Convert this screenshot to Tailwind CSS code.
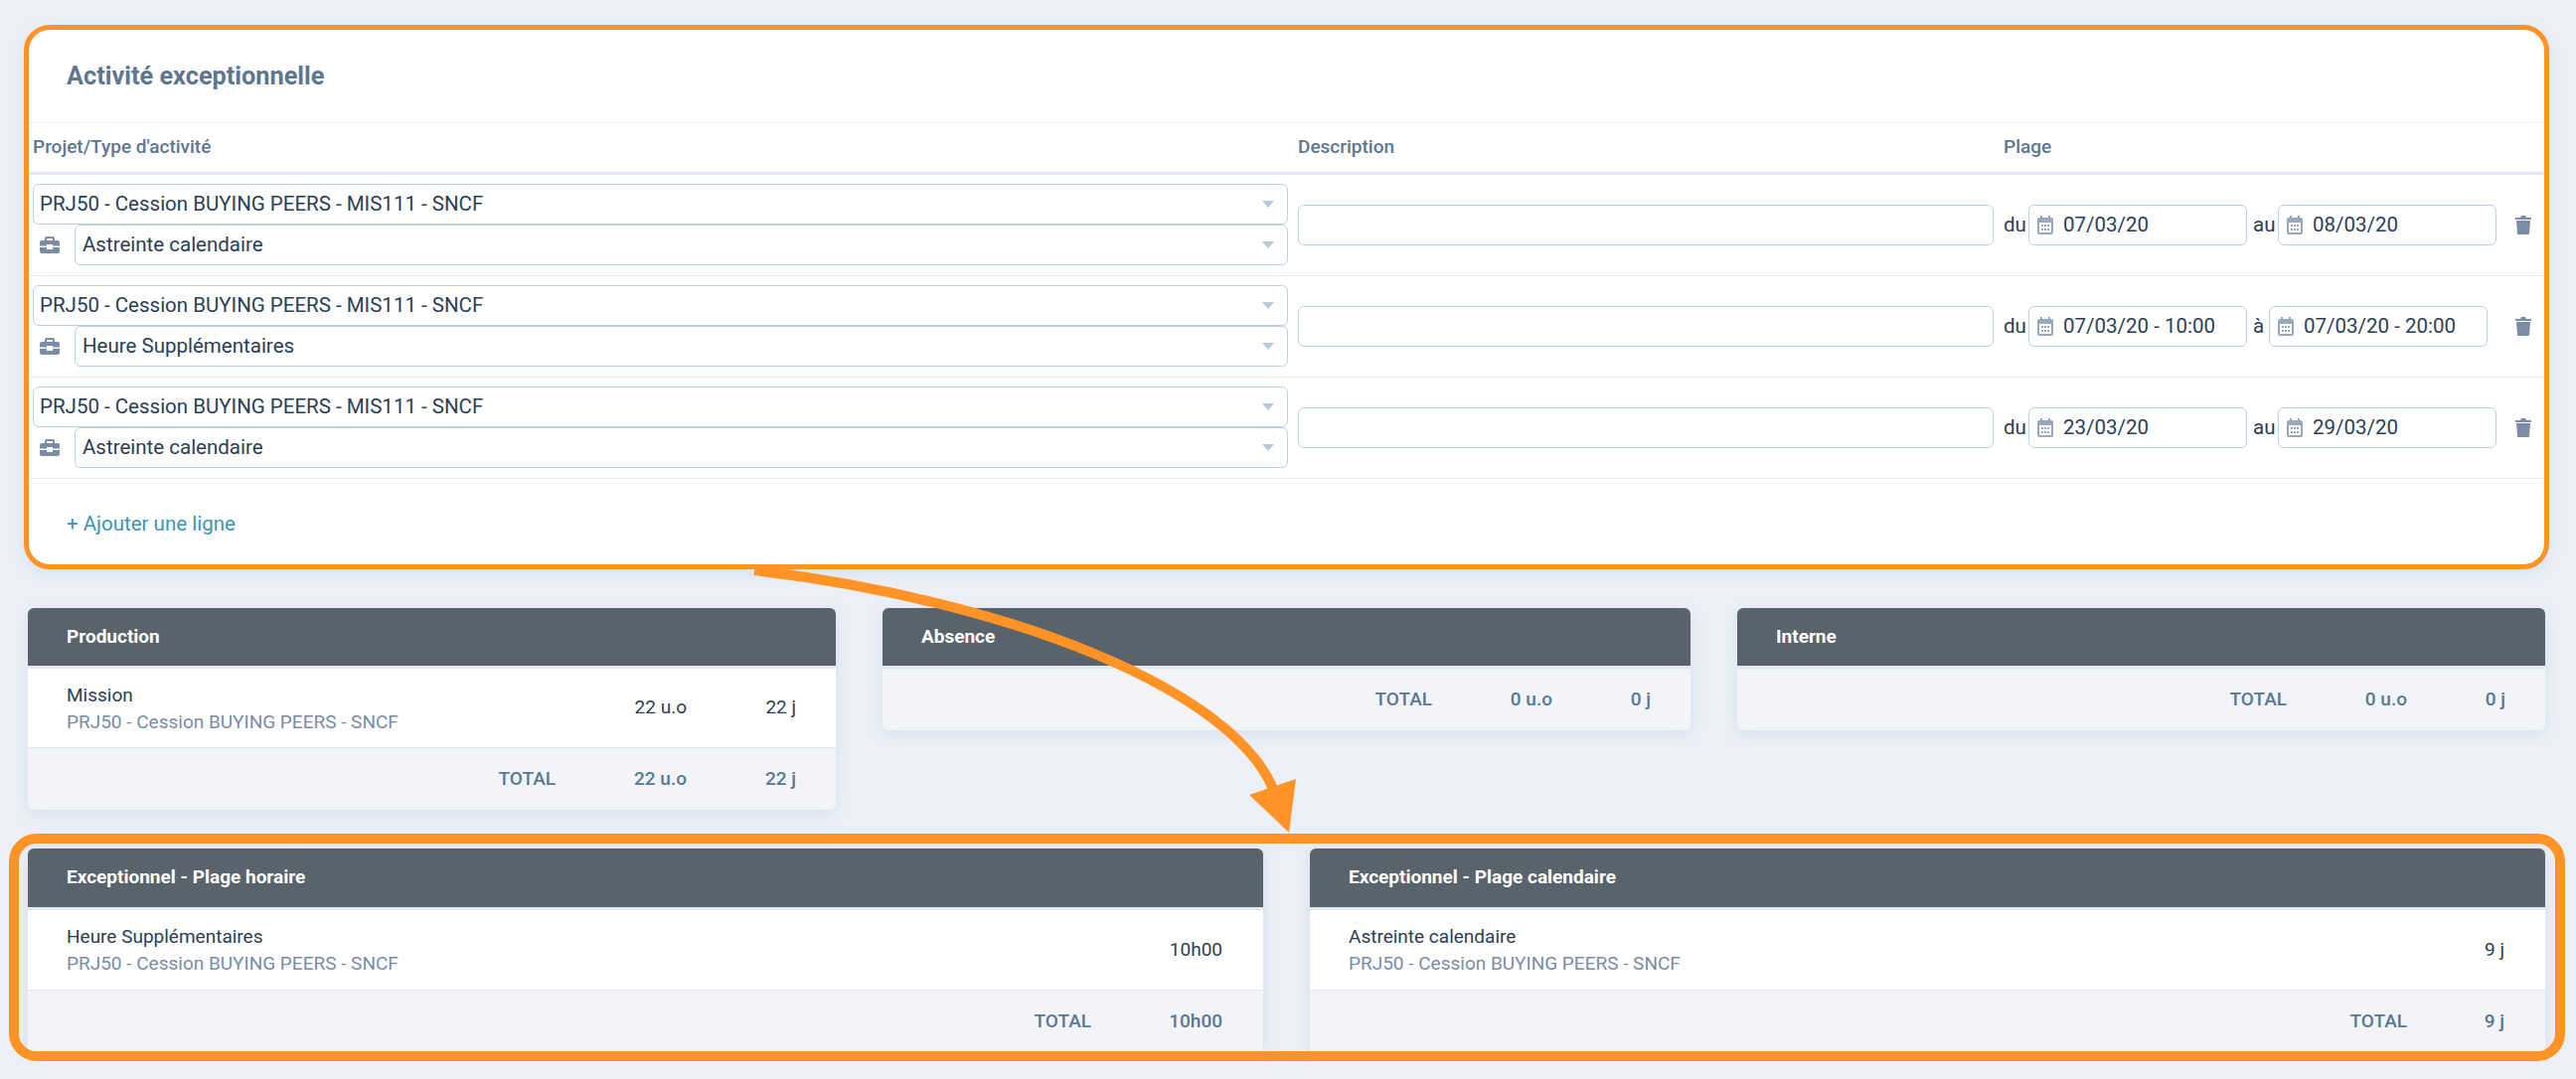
<!DOCTYPE html>
<html lang="fr">
<head>
    <meta charset="UTF-8">
    <title>Activité exceptionnelle</title>
    <script src="https://cdn.jsdelivr.net/npm/@tailwindcss/browser@4"></script>
</head>
<body class="relative w-[2592px] h-[1086px] overflow-hidden bg-[#ebf0f8] font-['Roboto',sans-serif] text-[19px] text-[#2c3e55]">

    <!-- Activité exceptionnelle -->
    <div class="pt-[25px] pl-[24px]">
        <div class="w-[2541px] h-[548px] bg-white border-[5px] border-[#ff9326] rounded-[26px] overflow-hidden shadow-[0_4px_14px_rgba(90,110,140,0.12)]">
            <h2 class="h-[93px] pl-[38px] flex items-center text-[25.300px] font-bold text-[#5f7690]">Activité exceptionnelle</h2>
            <div class="h-[53px] flex items-center border-t border-[#eef0f3] border-b-[3px] border-b-[#e5e9ee] text-[19px] font-medium text-[#5f7690]">
                <div class="w-[1277px] pl-[4px]">Projet/Type d'activité</div>
                <div class="w-[710px]">Description</div>
                <div>Plage</div>
            </div>

            <!-- ligne 1 -->
            <div class="h-[102px] flex border-b border-[#e8ebef] text-[20.500px]">
                <div class="w-[1263px] ml-[4px] mr-[10px] pt-[9px]">
                    <div class="h-[41px] flex items-center justify-between pl-[6px] pr-[13px] border border-[#c0d0e0] rounded-[6px]">
                        <span>PRJ50 - Cession BUYING PEERS - MIS111 - SNCF</span>
                        <svg width="12" height="7" viewBox="0 0 12 7"><path d="M0 0h12L6 7z" fill="#b9c9da"/></svg>
                    </div>
                    <div class="flex items-center">
                        <svg class="w-[20px] h-[17px] ml-[7px] mr-[15px]" viewBox="0 0 20 17"><path d="M7 0h6a2 2 0 0 1 2 2v2h3a2 2 0 0 1 2 2v3.500h-7V8H7v1.500H0V6a2 2 0 0 1 2-2h3V2a2 2 0 0 1 2-2zm0 2v2h6V2zM0 11h7v2h6v-2h7v4a2 2 0 0 1-2 2H2a2 2 0 0 1-2-2z" fill="#7a8ca6" fill-rule="evenodd"/></svg>
                        <div class="flex-1 h-[41px] flex items-center justify-between pl-[7px] pr-[13px] border border-[#c0d0e0] rounded-[6px]">
                            <span>Astreinte calendaire</span>
                            <svg width="12" height="7" viewBox="0 0 12 7"><path d="M0 0h12L6 7z" fill="#b9c9da"/></svg>
                        </div>
                    </div>
                </div>
                <div class="w-[700px] h-[41px] mt-[30px] border border-[#c0d0e0] rounded-[6px]"></div>
                <div class="flex items-center h-[41px] mt-[30px] ml-[10px]">
                    <span class="w-[25px]">du</span>
                    <div class="w-[220px] h-[41px] flex items-center pl-[8px] border border-[#c0d0e0] rounded-[6px]">
                        <svg class="w-[16px] h-[19px] mr-[10px]" viewBox="0 0 16 19"><path d="M3 0h2v2h6V0h2v2h1a2 2 0 0 1 2 2v13a2 2 0 0 1-2 2H2a2 2 0 0 1-2-2V4a2 2 0 0 1 2-2h1zM2 7v10h12V7z" fill="#98a8bc" fill-rule="evenodd"/><path d="M4 9h2v2H4zM7 9h2v2H7zM10 9h2v2h-2zM4 13h2v2H4zM7 13h2v2H7zM10 13h2v2h-2z" fill="#98a8bc"/></svg>
                        07/03/20
                    </div>
                    <span class="w-[31px] pl-[6px]">au</span>
                    <div class="w-[220px] h-[41px] flex items-center pl-[8px] border border-[#c0d0e0] rounded-[6px]">
                        <svg class="w-[16px] h-[19px] mr-[10px]" viewBox="0 0 16 19"><path d="M3 0h2v2h6V0h2v2h1a2 2 0 0 1 2 2v13a2 2 0 0 1-2 2H2a2 2 0 0 1-2-2V4a2 2 0 0 1 2-2h1zM2 7v10h12V7z" fill="#98a8bc" fill-rule="evenodd"/><path d="M4 9h2v2H4zM7 9h2v2H7zM10 9h2v2h-2zM4 13h2v2H4zM7 13h2v2H7zM10 13h2v2h-2z" fill="#98a8bc"/></svg>
                        08/03/20
                    </div>
                </div>
                <svg class="w-[16px] h-[19px] mt-[41px] ml-[19px]" viewBox="0 0 16 19"><path d="M6 0h4l1 2h5v2H0V2h5zM1 5h14l-1 13a1 1 0 0 1-1 1H3a1 1 0 0 1-1-1z" fill="#7a8ca6"/></svg>
            </div>

            <!-- ligne 2 -->
            <div class="h-[102px] flex border-b border-[#e8ebef] text-[20.500px]">
                <div class="w-[1263px] ml-[4px] mr-[10px] pt-[9px]">
                    <div class="h-[41px] flex items-center justify-between pl-[6px] pr-[13px] border border-[#c0d0e0] rounded-[6px]">
                        <span>PRJ50 - Cession BUYING PEERS - MIS111 - SNCF</span>
                        <svg width="12" height="7" viewBox="0 0 12 7"><path d="M0 0h12L6 7z" fill="#b9c9da"/></svg>
                    </div>
                    <div class="flex items-center">
                        <svg class="w-[20px] h-[17px] ml-[7px] mr-[15px]" viewBox="0 0 20 17"><path d="M7 0h6a2 2 0 0 1 2 2v2h3a2 2 0 0 1 2 2v3.500h-7V8H7v1.500H0V6a2 2 0 0 1 2-2h3V2a2 2 0 0 1 2-2zm0 2v2h6V2zM0 11h7v2h6v-2h7v4a2 2 0 0 1-2 2H2a2 2 0 0 1-2-2z" fill="#7a8ca6" fill-rule="evenodd"/></svg>
                        <div class="flex-1 h-[41px] flex items-center justify-between pl-[7px] pr-[13px] border border-[#c0d0e0] rounded-[6px]">
                            <span>Heure Supplémentaires</span>
                            <svg width="12" height="7" viewBox="0 0 12 7"><path d="M0 0h12L6 7z" fill="#b9c9da"/></svg>
                        </div>
                    </div>
                </div>
                <div class="w-[700px] h-[41px] mt-[30px] border border-[#c0d0e0] rounded-[6px]"></div>
                <div class="flex items-center h-[41px] mt-[30px] ml-[10px]">
                    <span class="w-[25px]">du</span>
                    <div class="w-[220px] h-[41px] flex items-center pl-[8px] border border-[#c0d0e0] rounded-[6px]">
                        <svg class="w-[16px] h-[19px] mr-[10px]" viewBox="0 0 16 19"><path d="M3 0h2v2h6V0h2v2h1a2 2 0 0 1 2 2v13a2 2 0 0 1-2 2H2a2 2 0 0 1-2-2V4a2 2 0 0 1 2-2h1zM2 7v10h12V7z" fill="#98a8bc" fill-rule="evenodd"/><path d="M4 9h2v2H4zM7 9h2v2H7zM10 9h2v2h-2zM4 13h2v2H4zM7 13h2v2H7zM10 13h2v2h-2z" fill="#98a8bc"/></svg>
                        07/03/20 - 10:00
                    </div>
                    <span class="w-[22px] pl-[6px]">à</span>
                    <div class="w-[220px] h-[41px] flex items-center pl-[8px] border border-[#c0d0e0] rounded-[6px]">
                        <svg class="w-[16px] h-[19px] mr-[10px]" viewBox="0 0 16 19"><path d="M3 0h2v2h6V0h2v2h1a2 2 0 0 1 2 2v13a2 2 0 0 1-2 2H2a2 2 0 0 1-2-2V4a2 2 0 0 1 2-2h1zM2 7v10h12V7z" fill="#98a8bc" fill-rule="evenodd"/><path d="M4 9h2v2H4zM7 9h2v2H7zM10 9h2v2h-2zM4 13h2v2H4zM7 13h2v2H7zM10 13h2v2h-2z" fill="#98a8bc"/></svg>
                        07/03/20 - 20:00
                    </div>
                </div>
                <svg class="w-[16px] h-[19px] mt-[41px] ml-[28px]" viewBox="0 0 16 19"><path d="M6 0h4l1 2h5v2H0V2h5zM1 5h14l-1 13a1 1 0 0 1-1 1H3a1 1 0 0 1-1-1z" fill="#7a8ca6"/></svg>
            </div>

            <!-- ligne 3 -->
            <div class="h-[102px] flex border-b border-[#e8ebef] text-[20.500px]">
                <div class="w-[1263px] ml-[4px] mr-[10px] pt-[9px]">
                    <div class="h-[41px] flex items-center justify-between pl-[6px] pr-[13px] border border-[#c0d0e0] rounded-[6px]">
                        <span>PRJ50 - Cession BUYING PEERS - MIS111 - SNCF</span>
                        <svg width="12" height="7" viewBox="0 0 12 7"><path d="M0 0h12L6 7z" fill="#b9c9da"/></svg>
                    </div>
                    <div class="flex items-center">
                        <svg class="w-[20px] h-[17px] ml-[7px] mr-[15px]" viewBox="0 0 20 17"><path d="M7 0h6a2 2 0 0 1 2 2v2h3a2 2 0 0 1 2 2v3.500h-7V8H7v1.500H0V6a2 2 0 0 1 2-2h3V2a2 2 0 0 1 2-2zm0 2v2h6V2zM0 11h7v2h6v-2h7v4a2 2 0 0 1-2 2H2a2 2 0 0 1-2-2z" fill="#7a8ca6" fill-rule="evenodd"/></svg>
                        <div class="flex-1 h-[41px] flex items-center justify-between pl-[7px] pr-[13px] border border-[#c0d0e0] rounded-[6px]">
                            <span>Astreinte calendaire</span>
                            <svg width="12" height="7" viewBox="0 0 12 7"><path d="M0 0h12L6 7z" fill="#b9c9da"/></svg>
                        </div>
                    </div>
                </div>
                <div class="w-[700px] h-[41px] mt-[30px] border border-[#c0d0e0] rounded-[6px]"></div>
                <div class="flex items-center h-[41px] mt-[30px] ml-[10px]">
                    <span class="w-[25px]">du</span>
                    <div class="w-[220px] h-[41px] flex items-center pl-[8px] border border-[#c0d0e0] rounded-[6px]">
                        <svg class="w-[16px] h-[19px] mr-[10px]" viewBox="0 0 16 19"><path d="M3 0h2v2h6V0h2v2h1a2 2 0 0 1 2 2v13a2 2 0 0 1-2 2H2a2 2 0 0 1-2-2V4a2 2 0 0 1 2-2h1zM2 7v10h12V7z" fill="#98a8bc" fill-rule="evenodd"/><path d="M4 9h2v2H4zM7 9h2v2H7zM10 9h2v2h-2zM4 13h2v2H4zM7 13h2v2H7zM10 13h2v2h-2z" fill="#98a8bc"/></svg>
                        23/03/20
                    </div>
                    <span class="w-[31px] pl-[6px]">au</span>
                    <div class="w-[220px] h-[41px] flex items-center pl-[8px] border border-[#c0d0e0] rounded-[6px]">
                        <svg class="w-[16px] h-[19px] mr-[10px]" viewBox="0 0 16 19"><path d="M3 0h2v2h6V0h2v2h1a2 2 0 0 1 2 2v13a2 2 0 0 1-2 2H2a2 2 0 0 1-2-2V4a2 2 0 0 1 2-2h1zM2 7v10h12V7z" fill="#98a8bc" fill-rule="evenodd"/><path d="M4 9h2v2H4zM7 9h2v2H7zM10 9h2v2h-2zM4 13h2v2H4zM7 13h2v2H7zM10 13h2v2h-2z" fill="#98a8bc"/></svg>
                        29/03/20
                    </div>
                </div>
                <svg class="w-[16px] h-[19px] mt-[41px] ml-[19px]" viewBox="0 0 16 19"><path d="M6 0h4l1 2h5v2H0V2h5zM1 5h14l-1 13a1 1 0 0 1-1 1H3a1 1 0 0 1-1-1z" fill="#7a8ca6"/></svg>
            </div>

            <div class="pl-[38px] pt-[30px] text-[20.500px] text-[#3f93b2]">+ Ajouter une ligne</div>
        </div>
    </div>

    <!-- Production / Absence / Interne -->
    <div class="grid grid-cols-3 gap-x-[47px] items-start ml-[28px] w-[2533px] mt-[39px]">
        <div class="rounded-[6px] overflow-hidden shadow-[0_4px_14px_rgba(90,110,140,0.12)]">
            <div class="h-[61px] flex items-center pl-[39px] bg-[#59636b] border-b-[3px] border-b-[#e3e8ef] text-white font-bold text-[19px]">Production</div>
            <div class="h-[79px] flex items-center bg-white pl-[39px] pr-[40px]">
                <div class="flex-1">
                    <div class="leading-[27px]">Mission</div>
                    <div class="leading-[27px] text-[#7a8ca6]">PRJ50 - Cession BUYING PEERS - SNCF</div>
                </div>
                <div class="w-[80px] text-right">22 u.o</div>
                <div class="w-[110px] text-right">22 j</div>
            </div>
            <div class="h-[63px] flex items-center justify-end bg-[#f2f4f8] border-t border-[#e3e8ef] pr-[40px] font-medium text-[#5a7896]">
                <div>TOTAL</div>
                <div class="w-[132px] text-right">22 u.o</div>
                <div class="w-[110px] text-right">22 j</div>
            </div>
        </div>
        <div class="rounded-[6px] overflow-hidden shadow-[0_4px_14px_rgba(90,110,140,0.12)]">
            <div class="h-[61px] flex items-center pl-[39px] bg-[#59636b] border-b-[3px] border-b-[#e3e8ef] text-white font-bold text-[19px]">Absence</div>
            <div class="h-[62px] flex items-center justify-end bg-[#f2f4f8] pr-[40px] font-medium text-[#5a7896]">
                <div>TOTAL</div>
                <div class="w-[121px] text-right">0 u.o</div>
                <div class="w-[99px] text-right">0 j</div>
            </div>
        </div>
        <div class="rounded-[6px] overflow-hidden shadow-[0_4px_14px_rgba(90,110,140,0.12)]">
            <div class="h-[61px] flex items-center pl-[39px] bg-[#59636b] border-b-[3px] border-b-[#e3e8ef] text-white font-bold text-[19px]">Interne</div>
            <div class="h-[62px] flex items-center justify-end bg-[#f2f4f8] pr-[40px] font-medium text-[#5a7896]">
                <div>TOTAL</div>
                <div class="w-[121px] text-right">0 u.o</div>
                <div class="w-[99px] text-right">0 j</div>
            </div>
        </div>
    </div>

    <!-- Exceptionnel -->
    <div class="ml-[9px] mt-[24px] w-[2572px] h-[229px] border-[10px] border-[#ff9326] rounded-[28px] pt-[5px] pl-[9px] pr-[10px] overflow-hidden">
        <div class="grid grid-cols-2 gap-x-[47px]">
            <div class="rounded-t-[6px] overflow-hidden shadow-[0_0_14px_rgba(90,110,140,0.14)]">
                <div class="h-[62px] flex items-center pl-[39px] bg-[#59636b] border-b-[3px] border-b-[#e3e8ef] text-white font-bold text-[19px]">Exceptionnel - Plage horaire</div>
                <div class="h-[80px] flex items-center bg-white pl-[39px] pr-[41px]">
                    <div class="flex-1">
                        <div class="leading-[27px]">Heure Supplémentaires</div>
                        <div class="leading-[27px] text-[#7a8ca6]">PRJ50 - Cession BUYING PEERS - SNCF</div>
                    </div>
                    <div class="w-[110px] text-right">10h00</div>
                </div>
                <div class="h-[63px] flex items-center justify-end bg-[#f2f4f8] border-t border-[#e3e8ef] pr-[41px] font-medium text-[#5a7896]">
                    <div>TOTAL</div>
                    <div class="w-[132px] text-right">10h00</div>
                </div>
            </div>
            <div class="rounded-t-[6px] overflow-hidden shadow-[0_0_14px_rgba(90,110,140,0.14)]">
                <div class="h-[62px] flex items-center pl-[39px] bg-[#59636b] border-b-[3px] border-b-[#e3e8ef] text-white font-bold text-[19px]">Exceptionnel - Plage calendaire</div>
                <div class="h-[80px] flex items-center bg-white pl-[39px] pr-[41px]">
                    <div class="flex-1">
                        <div class="leading-[27px]">Astreinte calendaire</div>
                        <div class="leading-[27px] text-[#7a8ca6]">PRJ50 - Cession BUYING PEERS - SNCF</div>
                    </div>
                    <div class="w-[110px] text-right">9 j</div>
                </div>
                <div class="h-[63px] flex items-center justify-end bg-[#f2f4f8] border-t border-[#e3e8ef] pr-[41px] font-medium text-[#5a7896]">
                    <div>TOTAL</div>
                    <div class="w-[98px] text-right">9 j</div>
                </div>
            </div>
        </div>
    </div>

    <!-- Flèche -->
    <svg class="absolute left-0 top-0 pointer-events-none" width="2592" height="1086" viewBox="0 0 2592 1086">
        <path d="M759 574 C 1020 605 1240 695 1281 794" fill="none" stroke="#ff9326" stroke-width="10"/>
        <path d="M1257 800 L1304 784 L1297 838 Z" fill="#ff9326"/>
    </svg>
</body>
</html>
